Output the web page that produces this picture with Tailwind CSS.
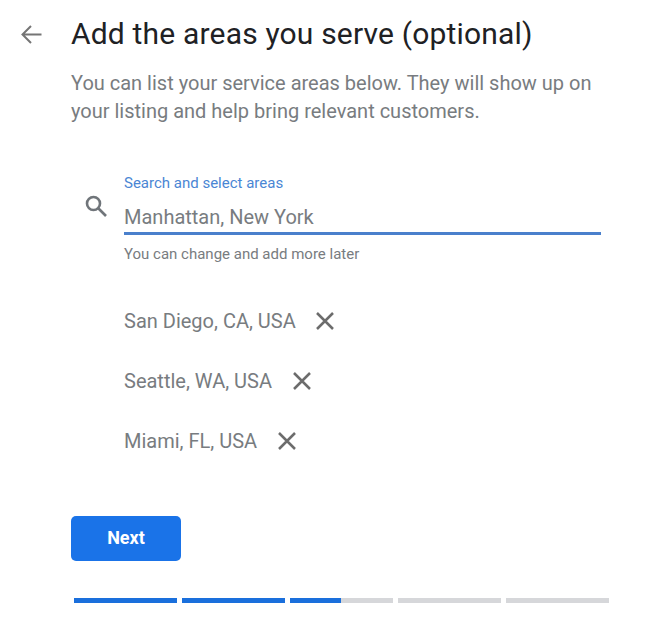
<!DOCTYPE html>
<html lang="en">
<head>
    <meta charset="UTF-8">
    <title>Service areas</title>
    <script src="https://cdn.jsdelivr.net/npm/@tailwindcss/browser@4"></script>
</head>
<body class="bg-white font-['Roboto',sans-serif] w-[666px] h-[622px] overflow-hidden">
    <!-- Header -->
    <div class="flex items-center pt-[18px] pl-[20px]">
        <svg class="w-[23px] h-[23px] text-[#757575]" viewBox="0 0 23 23" fill="none" stroke="currentColor" stroke-width="2">
            <path d="M21.5 11.5H2.5M11 3L2.5 11.5L11 20"/>
        </svg>
        <h1 class="ml-[28px] text-[30px] leading-[32px] tracking-[0.18px] text-[#202124] whitespace-nowrap">Add the areas you serve (optional)</h1>
    </div>
    <p class="ml-[71px] mt-[19px] w-[540px] text-[20px] leading-[28px] text-[#787c80]">You can list your service areas below. They will show up on your listing and help bring relevant customers.</p>

    <!-- Search field -->
    <div class="flex mt-[48px] ml-[84px]">
        <svg class="w-[24px] h-[24px] mt-[21px] text-[#70757a]" viewBox="0 0 24 24" fill="none" stroke="currentColor" stroke-width="2.6">
            <circle cx="9.5" cy="9.5" r="6.5"/>
            <path d="M14.5 14.5L22 22"/>
        </svg>
        <div class="ml-[16px] w-[477px]">
            <div class="text-[15px] leading-[20px] text-[#4a86d4]">Search and select areas</div>
            <div class="mt-[10px] h-[32px] text-[20px] leading-[28px] text-[#787c80] border-b-[3px] border-[#4a80cc]">Manhattan, New York</div>
            <div class="mt-[9px] text-[15px] leading-[20px] text-[#787c80]">You can change and add more later</div>
        </div>
    </div>

    <!-- Selected areas -->
    <div class="ml-[124px] mt-[43px] flex flex-col gap-[32px] text-[20px] leading-[28px] text-[#787c80]">
        <div class="flex items-center">
            <span>San Diego, CA, USA</span>
            <svg class="ml-[19px] w-[20px] h-[20px] text-[#6c6c6c]" viewBox="0 0 20 20" fill="none" stroke="currentColor" stroke-width="2.5"><path d="M2 2L18 18M18 2L2 18"/></svg>
        </div>
        <div class="flex items-center">
            <span>Seattle, WA, USA</span>
            <svg class="ml-[20px] w-[20px] h-[20px] text-[#6c6c6c]" viewBox="0 0 20 20" fill="none" stroke="currentColor" stroke-width="2.5"><path d="M2 2L18 18M18 2L2 18"/></svg>
        </div>
        <div class="flex items-center">
            <span>Miami, FL, USA</span>
            <svg class="ml-[20px] w-[20px] h-[20px] text-[#6c6c6c]" viewBox="0 0 20 20" fill="none" stroke="currentColor" stroke-width="2.5"><path d="M2 2L18 18M18 2L2 18"/></svg>
        </div>
    </div>

    <!-- Next -->
    <button class="block ml-[71px] mt-[61px] pb-[2px] w-[110px] h-[45px] rounded-[5px] bg-[#1a73e8] text-white text-[18px] font-bold">Next</button>

    <!-- Progress -->
    <div class="flex gap-[5px] ml-[74px] mt-[37px] w-[535px]">
        <div class="w-[103px] h-[5px] bg-[#1a6fdc]"></div>
        <div class="w-[103px] h-[5px] bg-[#1a6fdc]"></div>
        <div class="w-[103px] h-[5px] bg-[#d6d7da]"><div class="w-[51px] h-full bg-[#1a6fdc]"></div></div>
        <div class="w-[103px] h-[5px] bg-[#d6d7da]"></div>
        <div class="w-[103px] h-[5px] bg-[#d6d7da]"></div>
    </div>
</body>
</html>
